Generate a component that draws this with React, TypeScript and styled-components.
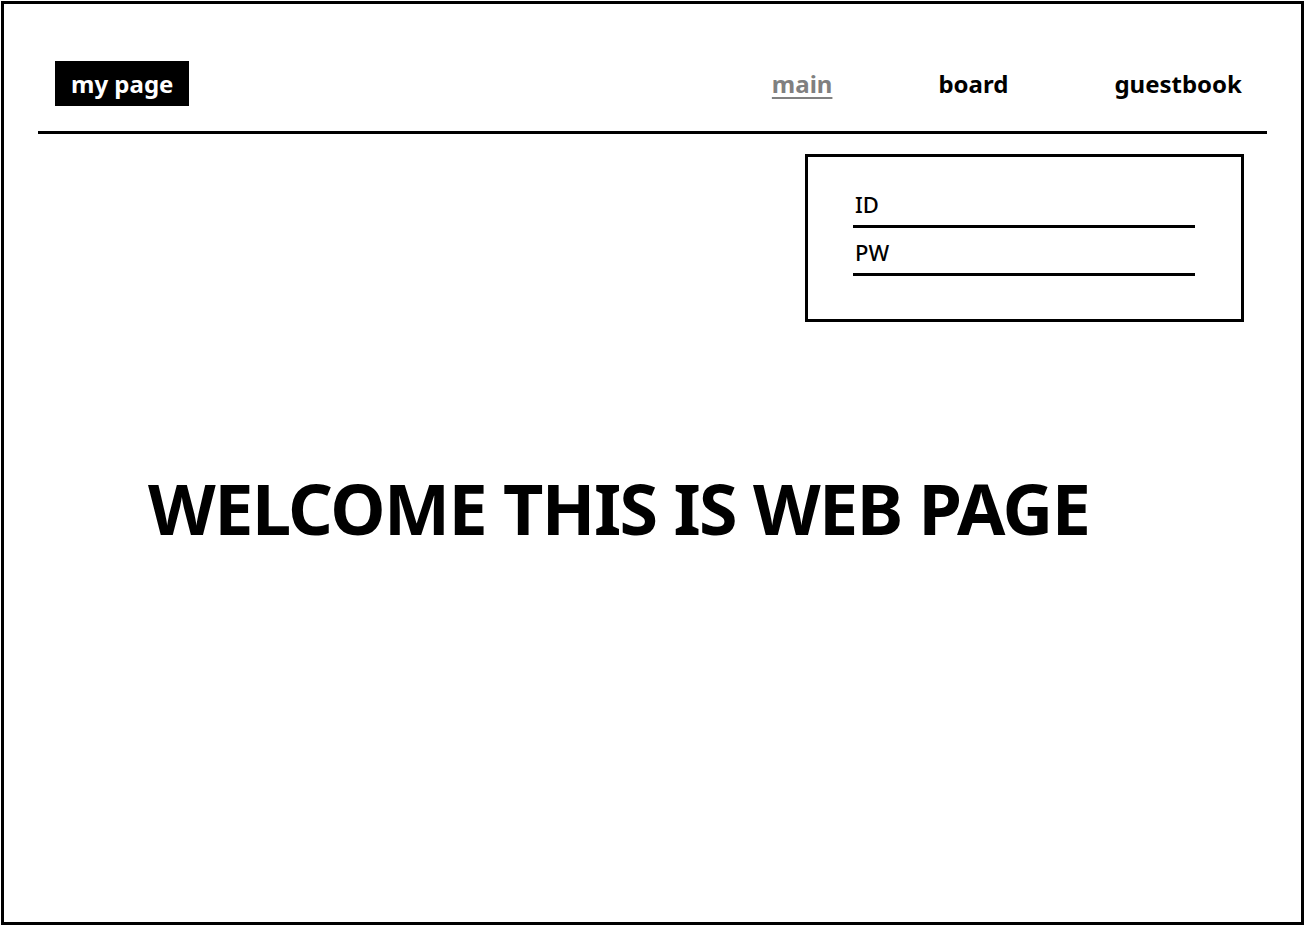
import styled, { createGlobalStyle } from "styled-components";

const GlobalStyle = createGlobalStyle`
  html, body {
    margin: 0;
    padding: 0;
    background: #ffffff;
  }
  body {
    font-family: "Noto Sans", "Open Sans", sans-serif;
    color: #000000;
  }
`;

const Frame = styled.div`
  box-sizing: border-box;
  margin: 1px;
  width: 1303px;
  height: 924px;
  border: 3px solid #000000;
  display: flex;
  flex-direction: column;
`;

const Header = styled.header`
  margin: 0 34px;
  padding: 57px 25px 25px 17px;
  border-bottom: 3px solid #000000;
  display: flex;
  align-items: center;
  justify-content: space-between;
`;

const Logo = styled.div`
  box-sizing: border-box;
  height: 45px;
  padding: 0 16px;
  background: #000000;
  color: #ffffff;
  font-size: 24px;
  font-weight: 700;
  display: flex;
  align-items: center;
`;

const Nav = styled.nav`
  display: flex;
  align-items: center;
  gap: 106px;
`;

interface INavLinkProps {
  active?: boolean;
}

const NavLink = styled.a<INavLinkProps>`
  font-size: 24px;
  font-weight: 700;
  color: ${({ active }) => (active ? "#808080" : "#000000")};
  text-decoration: ${({ active }) => (active ? "underline" : "none")};
  text-underline-offset: 4px;
  text-decoration-thickness: 2px;
`;

const Body = styled.main`
  display: flex;
  flex-direction: column;
`;

const LoginRow = styled.div`
  display: flex;
  justify-content: flex-end;
  padding: 20px 57px 0 0;
`;

const LoginBox = styled.form`
  box-sizing: border-box;
  width: 439px;
  height: 168px;
  border: 3px solid #000000;
  padding: 33px 46px 0 45px;
  display: flex;
  flex-direction: column;
  gap: 10px;
`;

const Field = styled.label`
  display: flex;
  align-items: center;
  padding: 0 0 7px 2px;
  border-bottom: 3px solid #000000;
  font-size: 22px;
  line-height: 28px;
  font-weight: 500;
`;

const FieldInput = styled.input`
  flex: 1;
  border: none;
  outline: none;
  background: transparent;
  font: inherit;
  margin-left: 8px;
  padding: 0;
`;

const Welcome = styled.h1`
  margin: 144px 0 0 144px;
  font-size: 70px;
  line-height: 84px;
  font-weight: 700;
  letter-spacing: -1.5px;
  white-space: nowrap;
`;

export default function App() {
  return (
    <>
      <GlobalStyle />
      <Frame>
        <Header>
          <Logo>my page</Logo>
          <Nav>
            <NavLink active>main</NavLink>
            <NavLink>board</NavLink>
            <NavLink>guestbook</NavLink>
          </Nav>
        </Header>
        <Body>
          <LoginRow>
            <LoginBox>
              <Field>
                ID
                <FieldInput />
              </Field>
              <Field>
                PW
                <FieldInput type="password" />
              </Field>
            </LoginBox>
          </LoginRow>
          <Welcome>WELCOME THIS IS WEB PAGE</Welcome>
        </Body>
      </Frame>
    </>
  );
}
